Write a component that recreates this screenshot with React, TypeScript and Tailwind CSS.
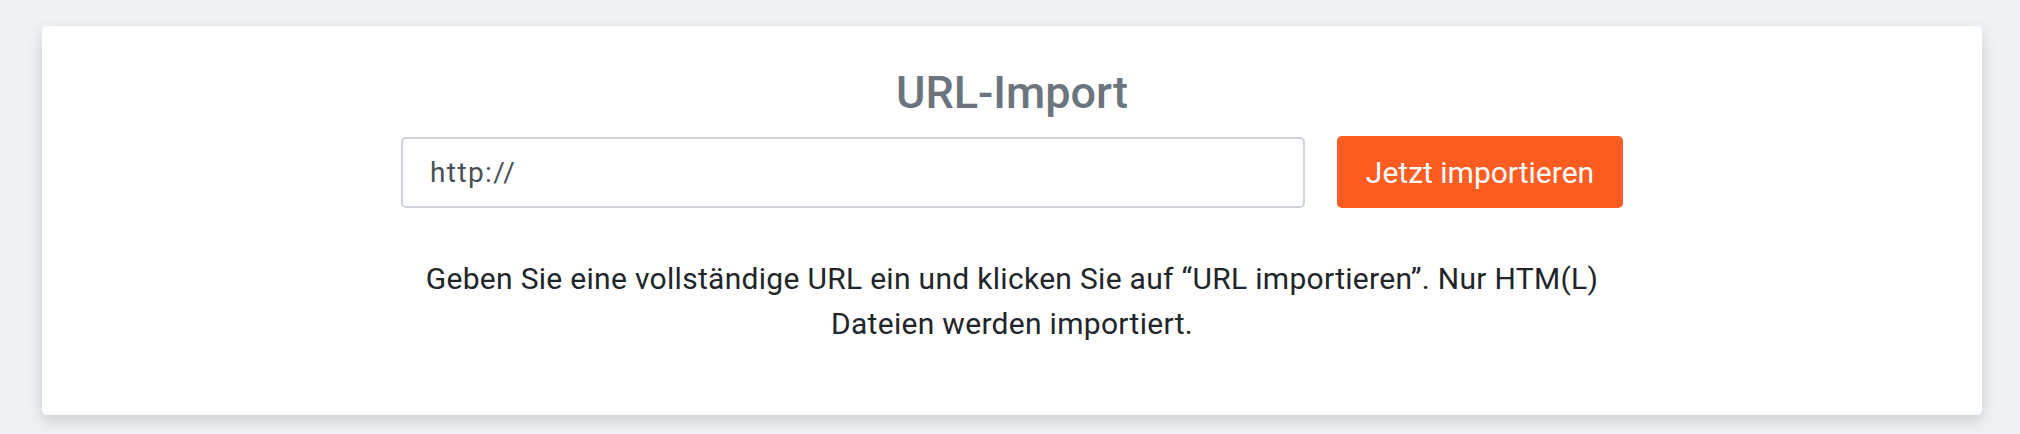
import React, { useState } from 'react'

export default function App() {
  const [url, setUrl] = useState('http://')

  return (
    <div className="min-h-[434px] w-full bg-[#eef2f5] pt-[26px] font-['Roboto',_'Liberation_Sans',_sans-serif]">
      <div className="ml-[42px] w-[1940px] rounded-[5px] bg-white pt-[40px] pb-[69px] shadow-[0_6px_14px_rgba(60,70,80,0.2)]">
        <h2 className="text-center text-[45px] leading-[54px] font-medium text-[#6c757d]">
          URL-Import
        </h2>

        <div className="mt-[16px] flex items-center justify-center gap-[32px]">
          <input
            type="text"
            value={url}
            onChange={(e) => setUrl(e.target.value)}
            className="h-[71px] w-[904px] rounded-[5px] border-2 border-[#ced4da] px-[27px] text-[28px] tracking-[0.05em] text-[#495057] outline-none"
          />
          <button className="h-[72px] w-[286px] rounded-[5px] bg-[#ff5c22] text-[30px] text-white">
            Jetzt importieren
          </button>
        </div>

        <p className="mx-auto mt-[48px] max-w-[1222px] text-center text-[30px] leading-[45px] tracking-[0.01em] text-[#212529]">
          Geben Sie eine vollständige URL ein und klicken Sie auf “URL importieren”. Nur HTM(L) Dateien werden importiert.
        </p>
      </div>
    </div>
  )
}
